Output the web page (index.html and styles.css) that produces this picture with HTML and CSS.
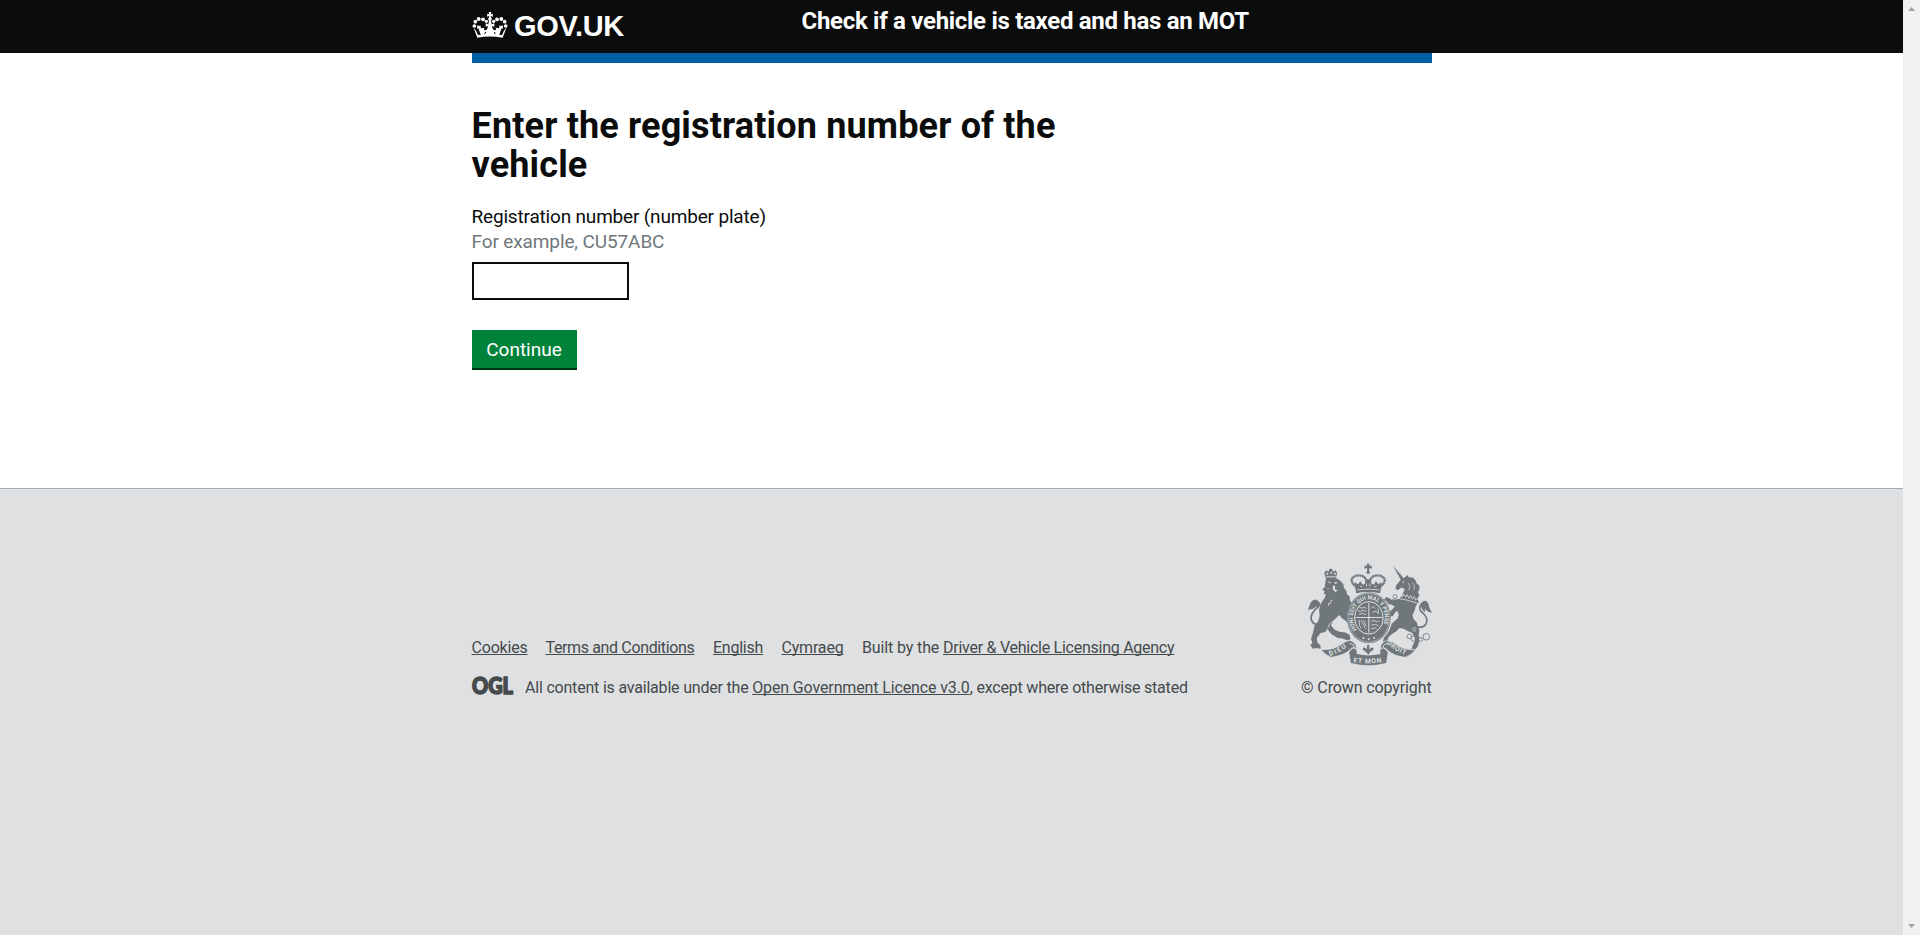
FILE: index.html
```
<!DOCTYPE html>
<html lang="en">
<head>
<meta charset="utf-8">
<title>Check if a vehicle is taxed and has an MOT</title>
<link rel="stylesheet" href="styles.css">
</head>
<body>
<div class="page">
  <header class="header">
    <div class="container header-inner">
      <a class="logo" href="#">
        <svg class="crown" viewBox="0 0 108 78" fill="#fff">
          <g>
            <circle cx="7" cy="42" r="5.5"/><circle cx="10" cy="29" r="5.5"/><circle cx="20" cy="21" r="5.8"/><circle cx="33" cy="22" r="5.8"/><circle cx="43" cy="28" r="5"/>
            <circle cx="101" cy="42" r="5.5"/><circle cx="98" cy="29" r="5.5"/><circle cx="88" cy="21" r="5.8"/><circle cx="75" cy="22" r="5.8"/><circle cx="65" cy="28" r="5"/>
            <path d="M50 0h8l-1.500 7 6-2v9l-6-2v6h-5v-6l-6 2v-9l6 2z"/>
            <circle cx="54" cy="21" r="5.500"/>
            <path d="M51 25h6l2 12 8-3v10l-7-2q2 14 10 13q4-2 1-8l10 2 2-9 4 3 5-4 1 11-4-1q-3 7-4 11l-2 9H25l-2-9q-1-4-4-11l-4 1 1-11 5 4 4-3 2 9 10-2q-3 6 1 8q8 1 10-13l-7 2V34l8 3z"/>
            <path d="M4 46l9 12 5 11q36-6 72 0l5-11 9-12-12 31q-38-7-76 0z"/>
          </g>
          <path d="M25 69l-4-9M38 66l3-6M70 66l-3-6M83 69l4-9" stroke="#0b0c0c" stroke-width="3" fill="none"/>
        </svg>
        <span class="logo-text">GOV.UK</span>
      </a>
      <a class="service-name" href="#">Check if a vehicle is taxed and has an MOT</a>
    </div>
  </header>
  <div class="container blue-bar"></div>
  <main class="container main">
    <h1 class="heading">Enter the registration number of the <span class="heading-end">vehicle</span></h1>
    <form class="form">
      <label class="label" for="vrm">Registration number (number plate)</label>
      <span class="hint">For example, CU57ABC</span>
      <input class="input" id="vrm" type="text">
      <button class="button" type="button">Continue</button>
    </form>
  </main>
  <footer class="footer">
    <div class="container footer-inner">
      <div class="meta">
        <ul class="links">
          <li class="li-cookies"><a href="#">Cookies</a></li>
          <li class="li-terms"><a href="#">Terms and Conditions</a></li>
          <li class="li-english"><a href="#">English</a></li>
          <li class="li-cymraeg"><a href="#">Cymraeg</a></li>
          <li class="li-built">Built by the <a class="agency" href="#">Driver &amp; Vehicle Licensing Agency</a></li>
        </ul>
        <div class="licence">
          <svg class="ogl" viewBox="0 0 41 18"><text x="0" y="17" textLength="41" lengthAdjust="spacingAndGlyphs">OGL</text></svg>
          <p class="licence-text">All content is available under the <a class="ogl-link" href="#">Open Government Licence v3.0</a>, except where otherwise stated</p>
        </div>
      </div>
      <a class="copyright" href="#">
        <svg class="crest" viewBox="50 40 376 310" fill="#6f777b">
          <defs>
            <path id="garter" d="M200 241A48 55 0 1 1 272 241"/>
            <path id="dieu" d="M118 320Q154 309 180 284"/>
            <path id="mon" d="M189 338Q234 347 284 337"/>
            <path id="droit" d="M289 282Q315 307 358 321"/>
          </defs>
          <!-- lion -->
          <path d="M106 85l-4-15 6-8 6 4 4-9h7l3 9 8-4 5 8-4 15q-15-4-31 0z"/>
          <g fill="#dee0e2"><circle cx="111" cy="72" r="3"/><circle cx="123" cy="69" r="3"/><circle cx="135" cy="72" r="3"/><path d="M107 79h32v2h-32z"/></g>
          <path d="M107 86q16-5 33 1l12 9 7 7 2 12 8 10 1 9 8 7 1 10 6 11-10 15-4 16 4 17-6 8-9-16-14-5-15 15-9 15 10 13 15 7 18 2 13 8 3 12-8 4-17-6-15-2-18-11-12-15-6 9-14 3-12 15 2 13 10 9-1 10-12-2-11 2-7-11 6-6-4-13 6-18 4-20 12-16 4-15-2-18 5-18 12-18 4-12-7 2 3-10-7-5 7-7z"/>
          <path d="M128 151l-8 4 2 6-8 1 1 7M112 236l8-15 18-13M149 240q8-8 18-1" fill="none" stroke="#dee0e2" stroke-width="2.500"/>
          <path d="M113 96l10 2-5 4zm18 3l12-2-7 7zM128 108l7 1-2 9 9 4-7 5-8-8zM109 115l7 2-2 3z" fill="#dee0e2"/>
          <path d="M94 226Q66 229 62 207q0-14 12-26 11-10 14-16" fill="none" stroke="#6f777b" stroke-width="5"/>
          <path d="M51 183q5-8 7-17 5-14 17-16 12 3 15 14-3 10-13 17l2-13q-7 12-23 12z"/>
          <path d="M145 179l10-8 15 5 12-6 4 8-16 13-14-3zM149 199l13-2 15 8-7 10-13-7z"/>
          <!-- crown -->
          <path d="M229 42h10l-2 7 8-1v9l-8-2v13h-6V55l-8 2v-9l8 1z"/>
          <circle cx="234" cy="68" r="5"/>
          <path d="M199 113Q181 99 185 88 190 78 208 77 229 79 231 104M269 113Q287 99 283 88 278 78 260 77 239 79 237 104" fill="none" stroke="#6f777b" stroke-width="7" stroke-dasharray="6 1"/>
          <path d="M193 97l10 7 8-9 5 10 8-2 2-13h16l2 13 8 2 5-10 8 9 10-7-5 34q-36-7-72 0z"/>
          <path d="M201 121q33-5 66 0M209 110l7 2M229 102v9M239 102v9M252 112l7-2" fill="none" stroke="#dee0e2" stroke-width="2.500"/>
          <!-- garter and shield -->
          <ellipse cx="236" cy="205" rx="66" ry="76"/>
          <ellipse cx="236" cy="205" rx="63" ry="73" fill="none" stroke="#dee0e2" stroke-width="1.500"/>
          <ellipse cx="236" cy="205" rx="43" ry="49" fill="none" stroke="#dee0e2" stroke-width="3"/>
          <g fill="none" stroke="#dee0e2" stroke-width="3"><path d="M236 160v90M196 204h80"/>
            <path d="M206 172l8 4 10-3 5 5M203 184l9 2 6-4 10 3M207 195l10-3 10 3M243 176l7-5 5 6M247 189l8-4 12 8M263 177l2 12M207 212q-2 18 6 25M213 213l13 25M220 212l8 18M243 216l9-3 7 4 9-3M244 227l12-2 9 4M243 238l12-3 5 4" stroke-width="2.500"/></g>
          <text class="crest-text crest-garter" fill="#dee0e2"><textPath href="#garter" textLength="220" lengthAdjust="spacingAndGlyphs">HONI SOIT QUI MAL Y PENSE</textPath></text>
          <g fill="#dee0e2"><circle cx="220" cy="266" r="3"/><circle cx="236" cy="269" r="3"/><circle cx="252" cy="266" r="3"/></g>
          <!-- unicorn -->
          <path d="M309 48l32 38-8 6z"/>
          <path d="M334 88L344 84 352 76 356 83 368 84 376 92 380 102 388 108 388 120 384 128 388 138 383 146 386 158 378 168 374 182 368 196 370 208 380 218 384 232 388 240 386 256 388 272 384 290 376 300 364 300 368 288 374 276 374 262 366 250 356 246 340 238 328 236 318 246 306 254 296 262 290 276 278 276 282 264 292 252 300 238 304 224 314 214 322 208 326 196 322 184 314 190 308 200 298 200 300 188 308 178 314 172 306 166 296 164 290 156 282 150 288 142 298 146 306 152 316 150 326 148 334 140 340 128 344 118 334 114 324 122 316 118 318 108 326 98Z"/>
          <path d="M329 136l8 6 3-9 7 10 4-8 6 11 5-8 5 11 6-8 4 11 8-7M327 147l25 5 32 10" fill="none" stroke="#dee0e2" stroke-width="2.500"/>
          <circle cx="340" cy="98" r="2.500" fill="#dee0e2"/>
          <path d="M354 100l6 10-4 12M366 98l7 9-1 15" fill="none" stroke="#dee0e2" stroke-width="2"/>
          <path d="M377 231q27 7 33-13 3-14-10-26-14-10-10-21" fill="none" stroke="#6f777b" stroke-width="5"/>
          <path d="M388 174q0-14 13-20 14-1 16 17 2 8 9 19-15-3-21-14l1 12q-10-5-11-15z"/>
          <g fill="none" stroke="#6f777b" stroke-width="2.500"><circle cx="315" cy="141" r="6"/><circle cx="309" cy="155" r="5"/><circle cx="308" cy="187" r="6"/><circle cx="358" cy="261" r="7"/><circle cx="371" cy="268" r="8"/><circle cx="391" cy="270" r="6"/><circle cx="409" cy="262" r="10"/></g>
          <g fill="none" stroke="#dee0e2" stroke-width="2"><circle cx="374" cy="196" r="5"/><circle cx="373" cy="240" r="5"/></g>
          <!-- scroll and motto -->
          <path d="M92 300q31 4 56-12 17-14 32-15 18 6 19 24-12-7-21 5-16 16-56 22-17-7-30-24z" stroke="#dee0e2" stroke-width="2"/>
          <path d="M377 300q-32 4-57-14-16-13-31-13-18 7-18 25 11-8 21 4 17 17 53 22 19-6 32-24z" stroke="#dee0e2" stroke-width="2"/>
          <path d="M176 309q5-10 13-13 14 2 11 17 35 9 70 0-4-16 10-17 10 5 14 13l-5 33q-54 14-108 0z" stroke="#dee0e2" stroke-width="2"/>
          <path d="M178 283q13-1 13 10M293 283q-14 0-13 10" fill="none" stroke="#dee0e2" stroke-width="3"/>
          <path d="M234 284q7 7 4 16 6-9 12-4 2 8-9 10v4h-4l-3 9-3-9h-4v-4q-11-2-9-10 6-5 12 4-3-9 4-16z"/>
          <g class="crest-text crest-motto" fill="#dee0e2">
            <text><textPath href="#dieu" textLength="58">DIEU</textPath></text>
            <text><textPath href="#mon" textLength="86">ET MON</textPath></text>
            <text><textPath href="#droit" textLength="66">DROIT</textPath></text>
          </g>
        </svg>
        <span class="copyright-text">© Crown copyright</span>
      </a>
    </div>
  </footer>
</div>
<div class="scrollbar"><span class="arrow arrow-up"></span><span class="arrow arrow-down"></span></div>
</body>
</html>
```
FILE: styles.css
```
* { box-sizing: border-box; }
body { margin: 0; height: 935px; display: flex; overflow: hidden; background: #fff; color: #0b0c0c; font-family: Roboto, "Liberation Sans", sans-serif; }
a { color: inherit; }
.page { width: 1903px; height: 935px; display: flex; flex-direction: column; }
.container { width: 960px; margin: 0 auto; }
.header { height: 53px; background: #0b0c0c; color: #fff; }
.header-inner { display: flex; align-items: flex-start; }
.logo { width: 330px; display: flex; text-decoration: none; }
.crown { width: 36px; height: 26px; margin: 12px 6px 0 .5px; }
.logo-text { padding-top: 9px; font: bold 29px/34px "Liberation Sans", sans-serif; letter-spacing: -.3px; }
.service-name { padding-top: 6px; font-size: 24px; line-height: 30px; font-weight: bold; text-decoration: none; letter-spacing: -.3px; white-space: nowrap; }
.blue-bar { height: 10px; background: #005ea5; }
.main { height: 425px; padding-top: 44px; }
.heading { margin: 0 0 19px; width: 640px; font-size: 36px; line-height: 39px; font-weight: bold; letter-spacing: .16px; }
.heading-end { display: block; }
.form { display: flex; flex-direction: column; align-items: flex-start; font-size: 19px; line-height: 25px; }
.label { letter-spacing: -.18px; }
.hint { color: #6f777b; letter-spacing: -.12px; }
.input { width: 157px; height: 38px; margin: 8px 0 30px; border: 2px solid #0b0c0c; border-radius: 0; background: #fff; font: inherit; }
.button { width: 105px; height: 40px; padding: 1px 0 2px; border: 0; background: #00823b; box-shadow: inset 0 -2px #003618; color: #fff; font: inherit; line-height: 37px; }
.footer { flex: 1; border-top: 1px solid #a1acb2; background: #dee0e2; color: #454a4c; font-size: 16px; line-height: 20px; padding-top: 74px; }
.footer-inner { display: flex; justify-content: space-between; align-items: flex-end; }
.footer a { text-underline-offset: 1px; text-decoration-thickness: 1px; text-decoration-skip-ink: none; }
.links { display: flex; margin: 0 0 20px; padding: 0; list-style: none; white-space: nowrap; }
.li-cookies { width: 74px; letter-spacing: -.2px; }
.li-terms { width: 167.5px; letter-spacing: -.36px; }
.li-english { width: 68.5px; letter-spacing: -.25px; }
.li-cymraeg { width: 80.5px; letter-spacing: -.19px; }
.li-built { letter-spacing: -.13px; }
.agency { letter-spacing: -.26px; }
.licence { display: flex; }
.ogl { width: 41px; height: 18px; margin: -1px 12px 0 .5px; overflow: visible; }
.ogl text { font: 900 23px Lato, sans-serif; fill: #454a4c; stroke: #454a4c; stroke-width: 1.6px; }
.licence-text { margin: 0; letter-spacing: -.2px; white-space: nowrap; }
.ogl-link { letter-spacing: -.13px; }
.copyright { display: flex; flex-direction: column; align-items: flex-end; }
.footer .copyright { text-decoration: none; }
.crest { width: 125px; height: 103px; margin-bottom: 12px; overflow: visible; }
.crest-text { font-family: Roboto, sans-serif; font-weight: bold; }
.crest-garter { font-size: 17px; }
.crest-motto { font-size: 20px; }
.copyright-text { letter-spacing: -.12px; }
.scrollbar { width: 17px; height: 935px; padding: 7px 5px; display: flex; flex-direction: column; justify-content: space-between; background: #f1f1f1; }
.arrow { width: 7px; height: 4px; background: #a3a3a3; }
.arrow-up { clip-path: polygon(50% 0, 100% 100%, 0 100%); }
.arrow-down { clip-path: polygon(0 0, 100% 0, 50% 100%); }
```
